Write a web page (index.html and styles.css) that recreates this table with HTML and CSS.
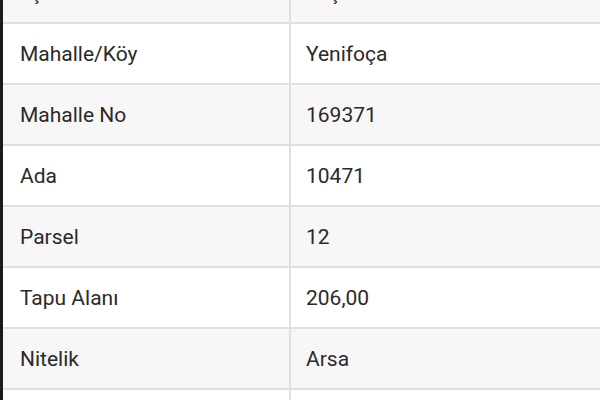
FILE: index.html
```html
<!DOCTYPE html>
<html lang="tr">
<head>
<meta charset="utf-8">
<link rel="stylesheet" href="styles.css">
</head>
<body>
<div class="screen">
  <div class="edge"></div>
  <div class="table">
    <div class="row alt"><div class="cell label">İlçe</div><div class="cell value">Foça</div></div>
    <div class="row"><div class="cell label">Mahalle/Köy</div><div class="cell value">Yenifoça</div></div>
    <div class="row alt"><div class="cell label">Mahalle No</div><div class="cell value">169371</div></div>
    <div class="row"><div class="cell label">Ada</div><div class="cell value">10471</div></div>
    <div class="row alt"><div class="cell label">Parsel</div><div class="cell value">12</div></div>
    <div class="row"><div class="cell label">Tapu Alanı</div><div class="cell value">206,00</div></div>
    <div class="row alt"><div class="cell label">Nitelik</div><div class="cell value">Arsa</div></div>
    <div class="row"><div class="cell label">&nbsp;</div><div class="cell value">&nbsp;</div></div>
  </div>
</div>
</body>
</html>
```
FILE: styles.css
```css
html, body {
  margin: 0;
  padding: 0;
  background: #ffffff;
  overflow: hidden;
}
.screen {
  display: flex;
  width: 600px;
  height: 400px;
  overflow: hidden;
}
.edge {
  width: 3px;
  flex: none;
  background: #1a1c1b;
}
.table {
  flex: 1;
  margin-top: -37px;
  font-family: Roboto, "Liberation Sans", sans-serif;
  font-size: 21px;
  color: #2a2a2a;
}
.row {
  display: grid;
  grid-template-columns: 288px 1fr;
  height: 59px;
  border-bottom: 2px solid #e1dfe0;
  background: #ffffff;
}
.row.alt {
  background: #f8f6f7;
}
.cell {
  display: flex;
  align-items: center;
}
.label {
  padding-left: 17px;
  border-right: 2px solid #e1dfe0;
}
.value {
  padding-left: 15px;
}
```
